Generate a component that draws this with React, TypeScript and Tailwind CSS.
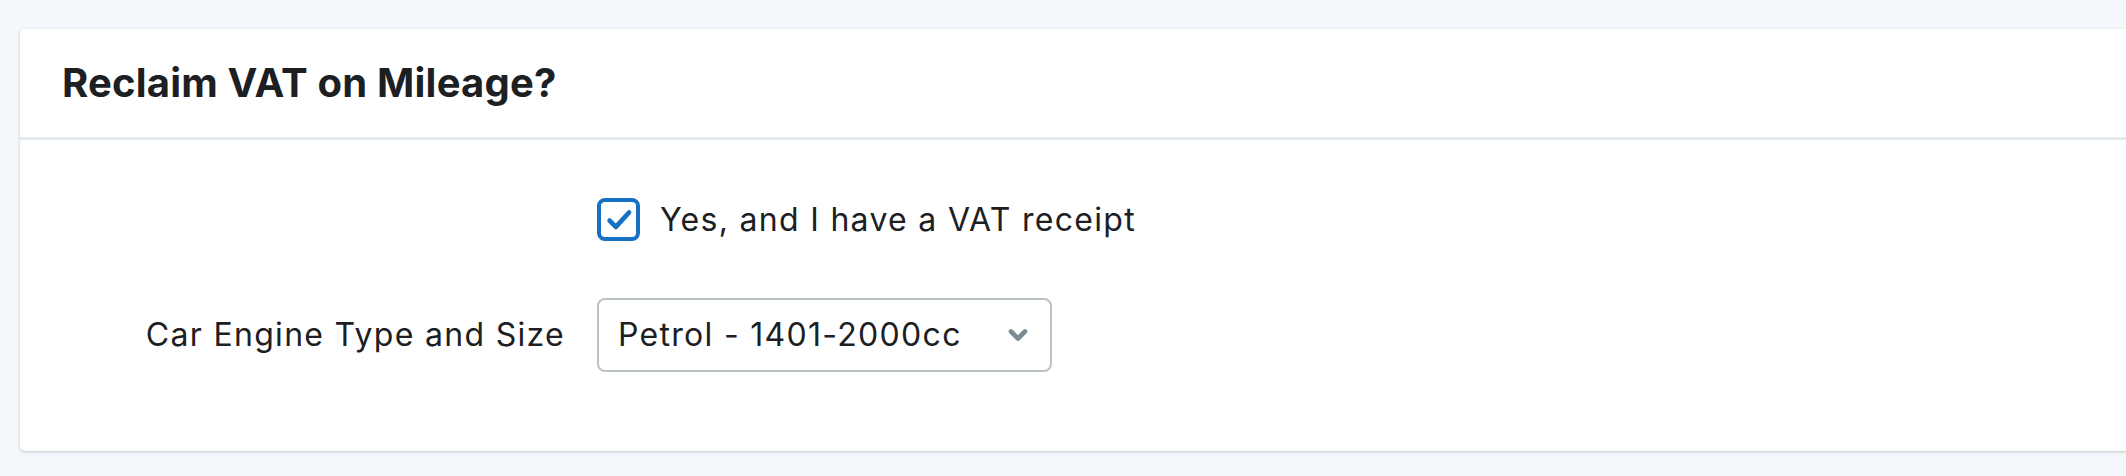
import { ChevronDown } from "lucide-react";

const font = { fontFamily: "Inter, 'Noto Sans', sans-serif" };

export default function App() {
  return (
    <div
      className="h-[476px] w-full overflow-hidden bg-[#f4f7fb] pt-[29px] pl-[20px] text-[#1c2023]"
      style={font}
    >
      <div className="w-[2140px] rounded-[5px] bg-white shadow-[0_1px_3px_rgba(40,50,60,0.25)]">
        <div className="flex h-[111px] items-center border-b-[3px] border-[#e3e8ec] px-[42px]">
          <h2 className="text-[40px] font-bold tracking-[0.2px]">Reclaim VAT on Mileage?</h2>
        </div>

        <div className="grid grid-cols-[545px_1fr] items-center gap-x-[32px] gap-y-[57px] pt-[58px] pb-[79px]">
          <div />
          <label className="flex h-[43px] items-center gap-[20px]">
            <span className="flex h-[43px] w-[43px] shrink-0 items-center justify-center rounded-[8px] border-[4px] border-[#1670c4]">
              <svg viewBox="0 0 24 24" className="h-[30px] w-[30px]" fill="none" stroke="#1670c4" strokeWidth="3.8" strokeLinecap="round" strokeLinejoin="round">
                <path d="M4.5 12.5l5 5L20 6" />
              </svg>
            </span>
            <span className="text-[32px] leading-none tracking-[1.3px]">Yes, and I have a VAT receipt</span>
          </label>

          <div className="text-right text-[32px] leading-none tracking-[1.3px]">Car Engine Type and Size</div>
          <div>
            <div className="flex h-[74px] w-[455px] items-center justify-between rounded-[8px] border-[2px] border-[#b9c3c8] pl-[19px] pr-[18px]">
              <span className="text-[32px] leading-none tracking-[1.3px]">Petrol - 1401-2000cc</span>
              <ChevronDown className="h-[28px] w-[28px] text-[#7b8a93]" strokeWidth={4} />
            </div>
          </div>
        </div>
      </div>
    </div>
  );
}
